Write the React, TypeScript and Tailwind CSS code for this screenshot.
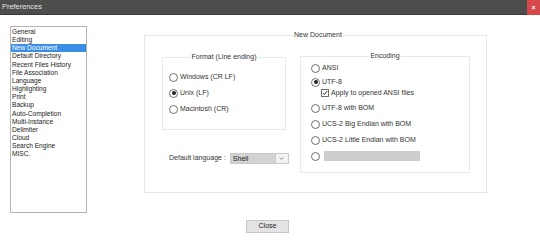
import React from "react";

const pages = [
  "General",
  "Editing",
  "New Document",
  "Default Directory",
  "Recent Files History",
  "File Association",
  "Language",
  "Highlighting",
  "Print",
  "Backup",
  "Auto-Completion",
  "Multi-Instance",
  "Delimiter",
  "Cloud",
  "Search Engine",
  "MISC.",
];

const Radio: React.FC<{ checked?: boolean; label?: string }> = ({
  checked,
  label,
}) => (
  <div className="flex h-[10px] items-center gap-[2px] leading-[10px]">
    <span className="flex h-[9px] w-[9px] shrink-0 items-center justify-center rounded-full border border-[#6f6f6f] bg-white">
      {checked && <span className="h-[4px] w-[4px] rounded-full bg-[#222]" />}
    </span>
    {label && <span>{label}</span>}
  </div>
);

const Group: React.FC<{
  title: string;
  className: string;
  children: React.ReactNode;
}> = ({ title, className, children }) => (
  <div className={`relative border border-[#e9e9e9] ${className}`}>
    <span className="absolute -top-[6px] left-1/2 -translate-x-1/2 whitespace-nowrap bg-white px-[1px] leading-[10px]">
      {title}
    </span>
    {children}
  </div>
);

export default function App() {
  return (
    <div className="flex h-[240px] w-[540px] flex-col bg-white font-['Liberation_Sans',sans-serif] text-[7px] text-[#333]">
      {/* title bar */}
      <div className="flex h-[15px] items-center justify-between border-b border-[#3a3a3a] bg-[#4d4d4b]">
        <span className="pl-[2px] text-[7.4px] text-[#e6e6e6]">Preferences</span>
        <span className="flex h-[15px] w-[13px] items-center justify-center bg-[#d5494a] text-[7px] font-bold leading-none text-white">
          ×
        </span>
      </div>

      <div className="flex flex-1">
        {/* page list */}
        <div className="ml-[10px] mt-[11px] h-[187px] w-[77px] border border-[#b5b5b5] pt-[1px] text-[6.6px]">
          {pages.map((p) => (
            <div
              key={p}
              className={`h-[8.17px] pl-[1px] leading-[8.17px] ${
                p === "New Document" ? "bg-[#3a8ee6] text-white" : "text-[#222]"
              }`}
            >
              {p}
            </div>
          ))}
        </div>

        {/* right side */}
        <div className="flex flex-col">
          <div className="relative ml-[57px] mt-[20px] h-[158px] w-[343px] border border-[#e6e6e6]">
            <span className="absolute -top-[6px] left-[148px] bg-white px-[1px] leading-[10px]">
              New Document
            </span>
            <div className="flex">
              <div className="flex w-[142px] shrink-0 flex-col">
                <Group
                  title="Format (Line ending)"
                  className="ml-[17px] mt-[21px] h-[73px] w-[124px]"
                >
                  <div className="flex flex-col gap-[6px] pl-[6px] pt-[14px]">
                    <Radio label="Windows (CR LF)" />
                    <Radio checked label="Unix (LF)" />
                    <Radio label="Macintosh (CR)" />
                  </div>
                </Group>
                <div className="ml-[24px] mt-[23px] flex items-center gap-[4px] whitespace-nowrap">
                  <span>Default language :</span>
                  <div className="flex h-[11px] w-[59px] shrink-0 border border-[#c9c9c9] bg-[#e8e8e8]">
                    <span className="flex-1 bg-[#d3d3d3] pl-[2px] leading-[9px] text-[#222]">
                      Shell
                    </span>
                    <span className="flex w-[13px] items-center justify-center border-l border-[#c9c9c9] bg-[#f2f2f2]">
                      <svg width="5" height="3" viewBox="0 0 5 3">
                        <path d="M0.5 0.5 L2.5 2.5 L4.5 0.5" fill="none" stroke="#777" strokeWidth="0.8" />
                      </svg>
                    </span>
                  </div>
                </div>
              </div>
              <Group
                title="Encoding"
                className="ml-[13px] mt-[20px] h-[117px] w-[170px]"
              >
                <div className="flex flex-col pl-[10px] pt-[6px]">
                  <Radio label="ANSI" />
                  <div className="mt-[4px]">
                    <Radio checked label="UTF-8" />
                  </div>
                  <div className="ml-[10px] mt-[1px] flex h-[10px] items-center gap-[2px] leading-[10px]">
                    <span className="flex h-[8px] w-[8px] items-center justify-center border border-[#6f6f6f] bg-white">
                      <svg width="6" height="6" viewBox="0 0 6 6">
                        <path d="M0.8 3 L2.4 4.6 L5.3 1" fill="none" stroke="#222" strokeWidth="0.9" />
                      </svg>
                    </span>
                    <span>Apply to opened ANSI files</span>
                  </div>
                  <div className="mt-[5px] flex flex-col gap-[6px]">
                    <Radio label="UTF-8 with BOM" />
                    <Radio label="UCS-2 Big Endian with BOM" />
                    <Radio label="UCS-2 Little Endian with BOM" />
                    <div className="flex items-center gap-[4px]">
                      <Radio />
                      <span className="h-[10px] w-[96px] bg-[#cdcdcd]" />
                    </div>
                  </div>
                </div>
              </Group>
            </div>
          </div>
          <div className="ml-[159px] mt-[27px] flex h-[13px] w-[43px] items-center justify-center border border-[#c6c6c6] bg-[#e3e3e3] text-[#222]">
            Close
          </div>
        </div>
      </div>
    </div>
  );
}
